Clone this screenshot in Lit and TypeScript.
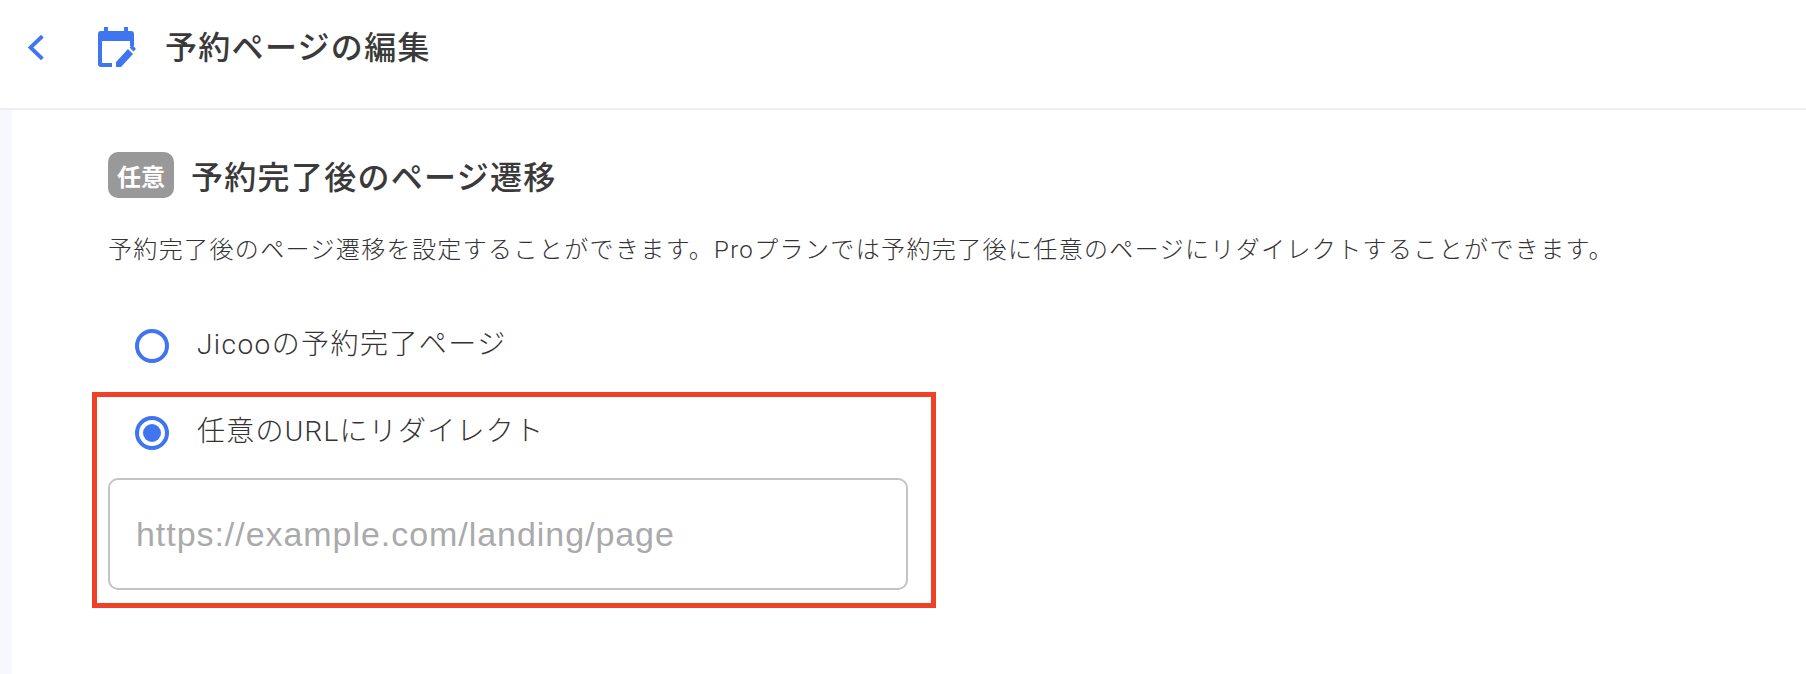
import { LitElement, html, css } from "lit";
import { customElement } from "lit/decorators.js";

const FONT = css`"Liberation Sans", "Noto Sans CJK JP", sans-serif`;
const LIGHT_FONT = css`Roboto, "Noto Sans CJK JP", sans-serif`;

@customElement("app-root")
export class AppRoot extends LitElement {
  static styles = css`
    :host {
      display: block;
      position: relative;
      height: 674px;
      overflow: hidden;
      background: #fff;
      color: #3a3a3a;
      font-family: ${FONT};
    }

    .header {
      box-sizing: content-box;
      height: 94px;
      padding-bottom: 14px;
      border-bottom: 2px solid #eeeeee;
      display: flex;
      align-items: center;
    }
    .back {
      display: block;
      margin-left: 26px;
      width: 20px;
      height: 30px;
    }
    .cal {
      display: block;
      margin-left: 52px;
      width: 38px;
      height: 40px;
    }
    .header h1 {
      margin: 2px 0 0 29px;
      font-size: 32px;
      font-weight: 500;
      letter-spacing: 1.3px;
      line-height: 40px;
    }

    .body {
      display: flex;
      height: 564px;
    }
    .strip {
      width: 12px;
      background: #f6f8fe;
    }
    .main {
      flex: 1;
      padding: 42px 0 0 96px;
    }

    .section-title {
      display: flex;
      align-items: center;
      gap: 17px;
      height: 46px;
    }
    .badge {
      width: 66px;
      height: 46px;
      border-radius: 10px;
      background: #999;
      color: #fff;
      font-size: 24px;
      font-weight: 700;
      display: flex;
      align-items: center;
      justify-content: center;
    }
    h2 {
      margin: 0;
      font-size: 32px;
      font-weight: 500;
      letter-spacing: 1.3px;
    }
    .desc {
      margin: 34px 0 0;
      color: #333;
      font-family: ${LIGHT_FONT};
      font-size: 24px;
      font-weight: 300;
      line-height: 36px;
      letter-spacing: 1.37px;
    }

    .radio-row {
      display: flex;
      align-items: center;
      gap: 28px;
      padding-left: 27px;
      height: 40px;
      color: #333;
      font-family: ${LIGHT_FONT};
      font-size: 28px;
      font-weight: 300;
    }
    .radio-row.first {
      margin-top: 58px;
      letter-spacing: 1.43px;
    }
    .radio-row.second {
      margin-top: 47px;
      letter-spacing: 1.26px;
    }
    .radio {
      width: 34px;
      height: 34px;
      box-sizing: border-box;
      border: 4px solid #3f75ee;
      border-radius: 50%;
      display: flex;
      align-items: center;
      justify-content: center;
      flex: none;
    }
    .radio.on::after {
      content: "";
      width: 18px;
      height: 18px;
      border-radius: 50%;
      background: #3f75ee;
    }
    .radio-row span {
      position: relative;
      top: -4px;
    }

    input {
      display: block;
      box-sizing: border-box;
      margin-top: 25px;
      width: 800px;
      height: 112px;
      border: 2px solid #c4c4c4;
      border-radius: 10px;
      padding: 0 26px;
      outline: none;
      background: #fff;
      font-family: ${FONT};
      font-size: 34px;
      letter-spacing: 0.95px;
    }
    input::placeholder {
      color: #aaaaaa;
      opacity: 1;
    }

    .highlight {
      position: absolute;
      left: 92px;
      top: 392px;
      width: 844px;
      height: 216px;
      box-sizing: border-box;
      border: 5px solid #ee4127;
      pointer-events: none;
    }
  `;

  render() {
    return html`
      <div class="header">
        <svg class="back" viewBox="0 0 20 30" fill="none">
          <path d="M15 5.500 L4.500 15.500 L15 25.500" stroke="#3f75ee" stroke-width="3.800" stroke-linecap="square" />
        </svg>
        <svg class="cal" viewBox="0 0 38 40" fill="#3f75ee">
          <path d="M3 4h3V0h4v4h16V0h4v4h3a3 3 0 0 1 3 3v12h-4v-5H4v22h10v4H3a3 3 0 0 1-3-3V7a3 3 0 0 1 3-3z" />
          <path d="M18 40v-5L30 22l5 5L23 40z" />
          <path d="M31.500 20.500l1.800-1.800a1.200 1.200 0 0 1 1.700 0l2.300 2.300a1.200 1.200 0 0 1 0 1.700l-1.800 1.800z" />
        </svg>
        <h1>予約ページの編集</h1>
      </div>
      <div class="body">
        <div class="strip"></div>
        <div class="main">
          <div class="section-title">
            <div class="badge">任意</div>
            <h2>予約完了後のページ遷移</h2>
          </div>
          <p class="desc">
            予約完了後のページ遷移を設定することができます。Proプランでは予約完了後に任意のページにリダイレクトすることができます。
          </p>
          <div class="radio-row first">
            <div class="radio"></div>
            <span>Jicooの予約完了ページ</span>
          </div>
          <div class="radio-row second">
            <div class="radio on"></div>
            <span>任意のURLにリダイレクト</span>
          </div>
          <input type="text" placeholder="https://example.com/landing/page" />
        </div>
      </div>
      <div class="highlight"></div>
    `;
  }
}
